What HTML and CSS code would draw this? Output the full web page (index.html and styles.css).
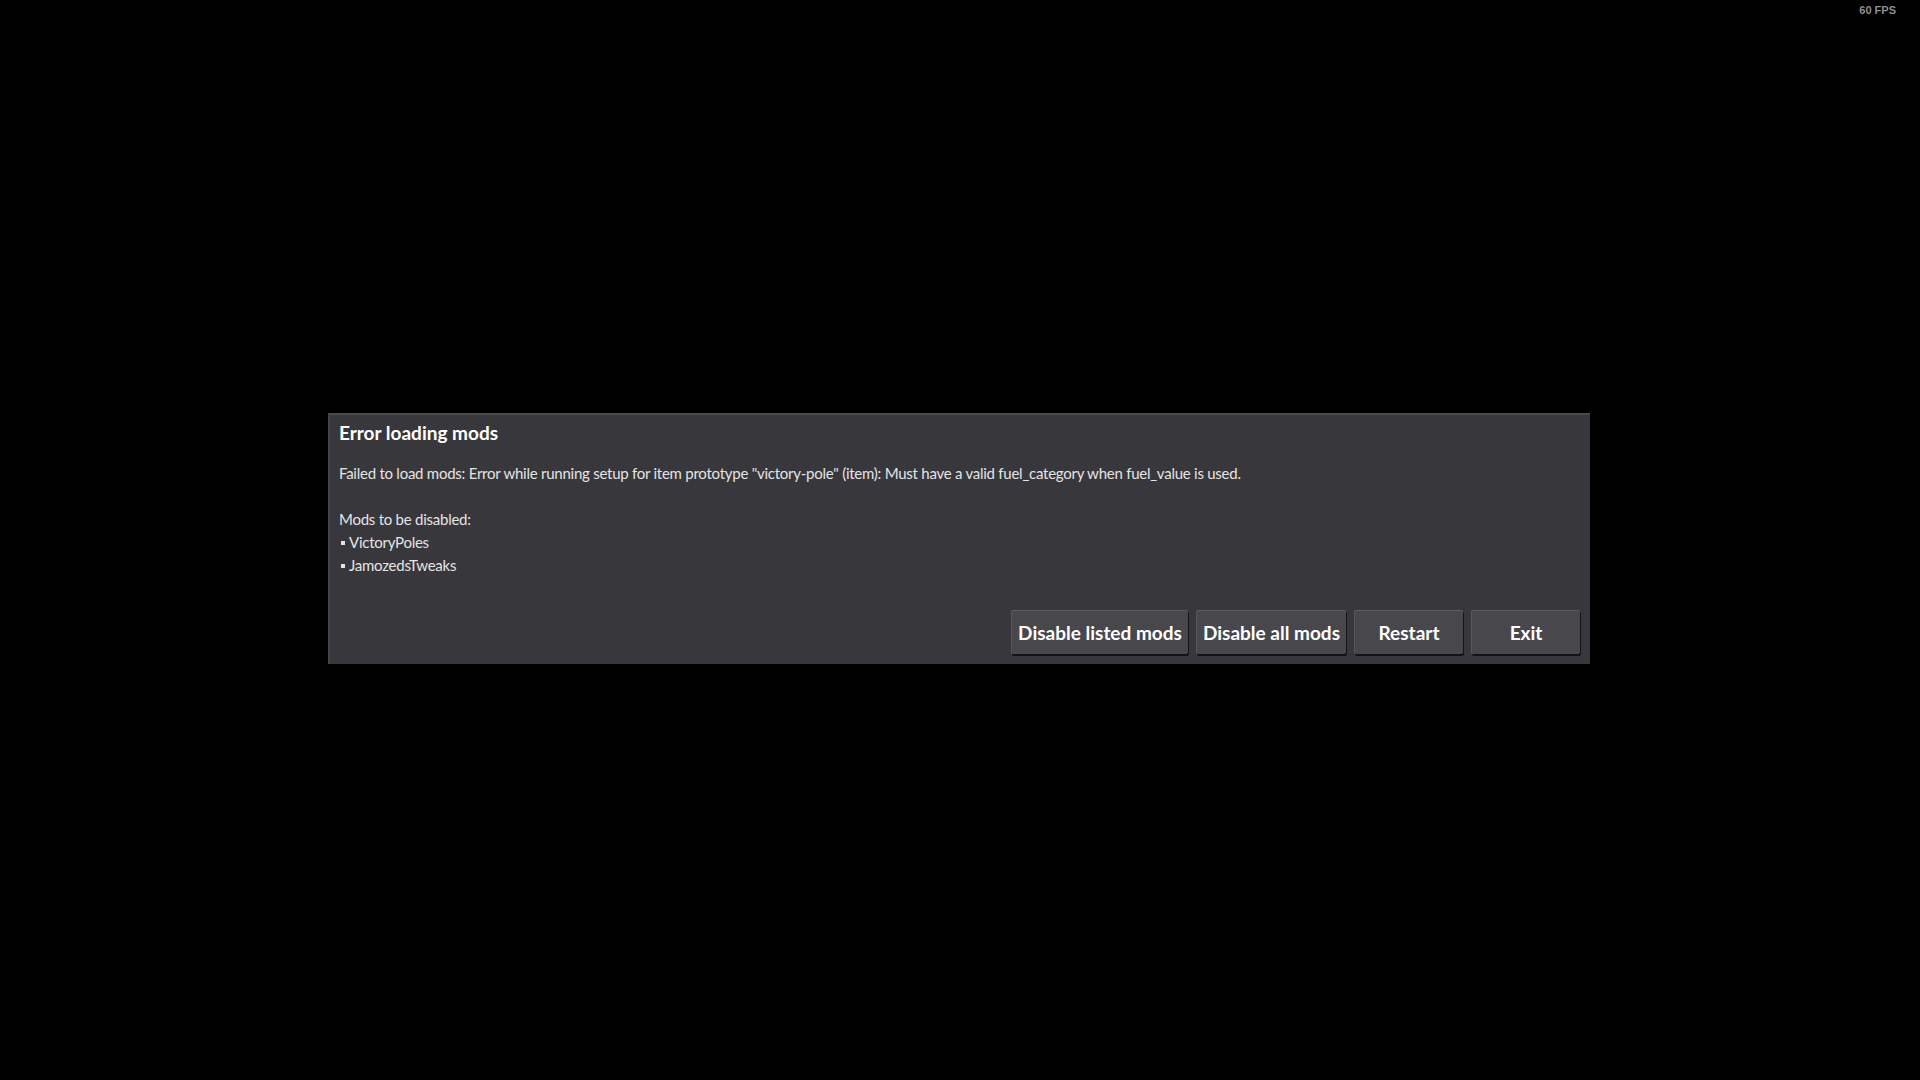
FILE: index.html
```html
<!DOCTYPE html>
<html lang="en">
<head>
<meta charset="UTF-8">
<title>Error loading mods</title>
<link rel="stylesheet" href="styles.css">
</head>
<body>
<div class="fps">60 FPS</div>
<div class="dialog">
<h2 class="dialog-title">Error loading mods</h2>
<div class="dialog-body">
<p>Failed to load mods: Error while running setup for item prototype "victory-pole" (item): Must have a valid fuel_category when fuel_value is used.</p>
<p class="blank">&nbsp;</p>
<p>Mods to be disabled:</p>
<ul class="mod-list">
<li>VictoryPoles</li>
<li>JamozedsTweaks</li>
</ul>
</div>
<div class="dialog-buttons">
<button class="btn-listed">Disable listed mods</button>
<button class="btn-all">Disable all mods</button>
<button class="btn-small">Restart</button>
<button class="btn-small">Exit</button>
</div>
</div>
</body>
</html>
```

FILE: styles.css
```css
/* Reset */
* {
  margin: 0;
  padding: 0;
  box-sizing: border-box;
}
body {
  background-color: #000;
  height: 100vh;
  display: flex;
  justify-content: center;
  align-items: center;
  font-family: Lato, "Liberation Sans", sans-serif;
}
.fps {
  position: absolute;
  top: 4px;
  right: 24px;
  font-family: "Liberation Sans", Arial, sans-serif;
  font-size: 11px;
  font-weight: bold;
  color: #8e8e8e;
}
/* Dialog */
.dialog {
  width: 1262px;
  background-color: #38373c;
  border-top: 2px solid #4a494e;
  border-left: 2px solid #434247;
  padding: 6px 10px 10px 9px;
  margin-left: -2px;
  margin-bottom: 4px;
}
.dialog-title {
  font-size: 19px;
  font-weight: bold;
  color: #fff;
  line-height: 24px;
  margin-bottom: 17px;
}
.dialog-body {
  font-size: 15px;
  letter-spacing: -0.25px;
  line-height: 23px;
  color: #e4e4e4;
  min-height: 148px;
}
.mod-list {
  list-style: none;
}
.mod-list li::before {
  content: "";
  display: inline-block;
  width: 4px;
  height: 4px;
  background-color: #e4e4e4;
  margin: 0 4px 2px 2px;
  vertical-align: middle;
}
/* Buttons */
.dialog-buttons {
  display: flex;
  justify-content: flex-end;
  gap: 8px;
}
button {
  height: 44px;
  padding: 0;
  background-color: #48474c;
  color: #fff;
  font-family: Lato, "Liberation Sans", sans-serif;
  font-size: 19px;
  font-weight: bold;
  border: none;
  border-radius: 2px;
  border-top: 1px solid #5e5d62;
  border-left: 1px solid #58575c;
  box-shadow: 1px 2px 0 #141414;
}
.btn-listed {
  width: 177px;
}
.btn-all {
  width: 150px;
}
.btn-small {
  width: 109px;
}
```
